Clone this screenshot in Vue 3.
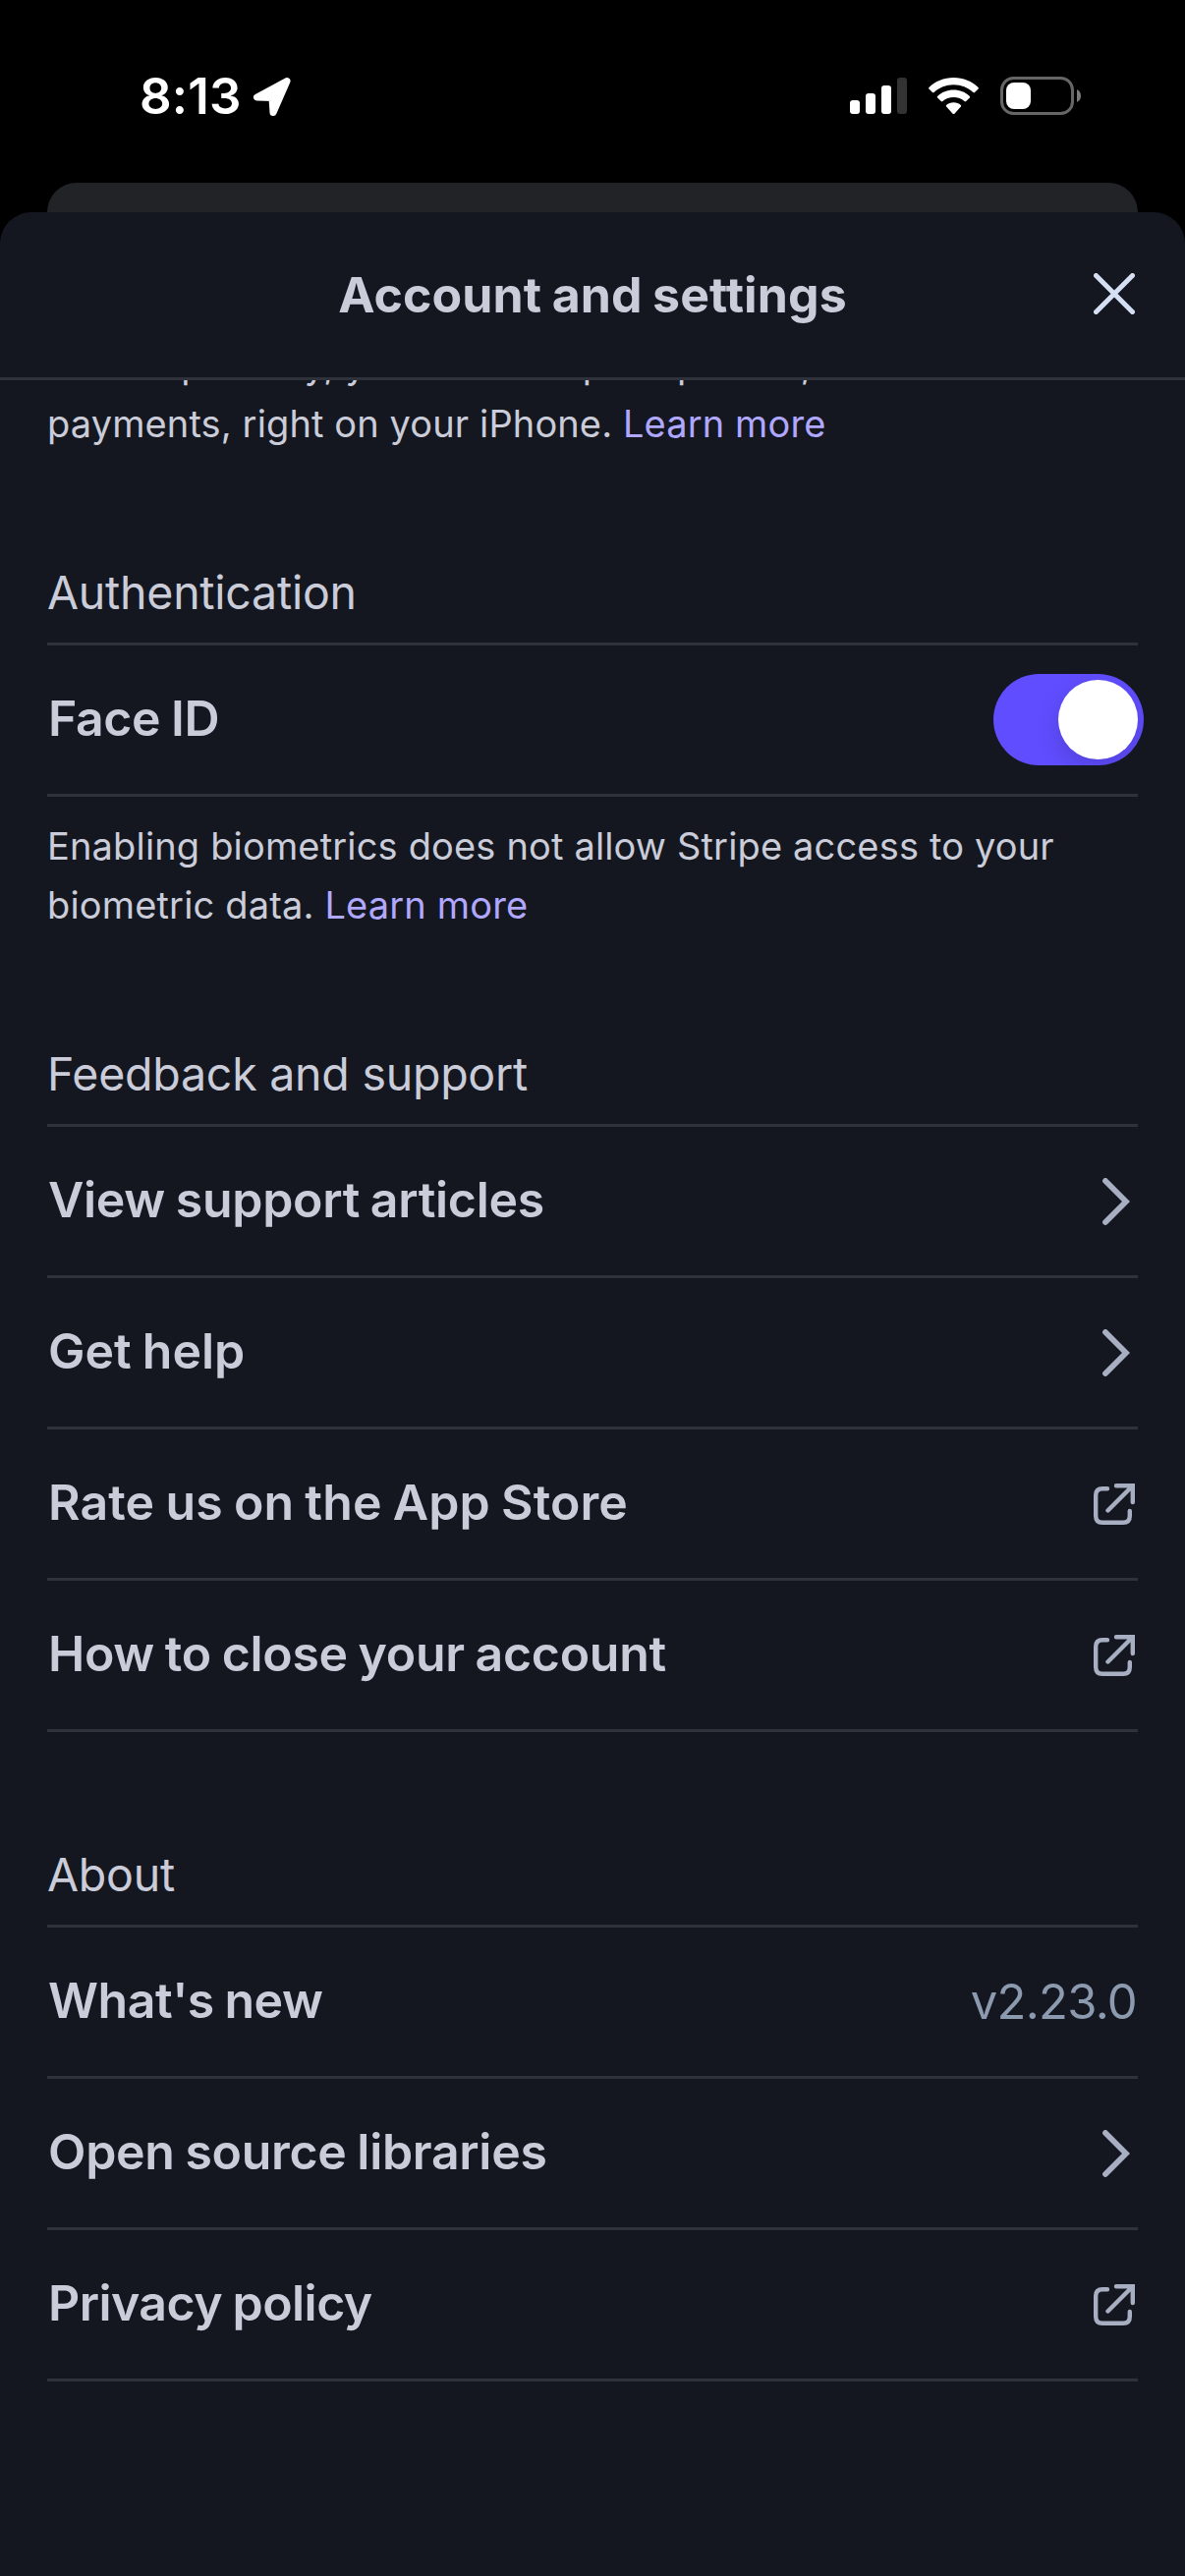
<script setup>
import { ref } from 'vue'

const faceId = ref(true)

// `tracking` is the letter spacing of each label, in pixels
const support = [
  { label: 'View support articles', icon: 'chevron', tracking: -0.3 },
  { label: 'Get help', icon: 'chevron', tracking: 0 },
  { label: 'Rate us on the App Store', icon: 'external', tracking: 0.1 },
  { label: 'How to close your account', icon: 'external', tracking: -0.3 }
]
const about = [
  { label: "What's new", value: 'v2.23.0', tracking: -0.45 },
  { label: 'Open source libraries', icon: 'chevron', tracking: -0.3 },
  { label: 'Privacy policy', icon: 'external', tracking: -0.56 }
]
const groups = [
  { title: 'Feedback and support', rows: support },
  { title: 'About', rows: about }
]
</script>

<template>
  <div class="screen">
    <header class="status">
      <div class="clock">
        <span class="time">8:13</span>
        <svg class="location" width="40" height="40" viewBox="0 0 40 40">
          <path d="M35 3.5 L4.5 20 L20 20.5 L21 35.5 Z" fill="#fff" stroke="#fff" stroke-width="7" stroke-linejoin="round" />
        </svg>
      </div>
      <div class="indicators">
        <svg width="58" height="37" viewBox="0 0 58 37" fill="#fff">
          <rect x="0" y="23" width="10" height="14" rx="3" />
          <rect x="16" y="16" width="10" height="21" rx="3" />
          <rect x="32" y="8" width="10" height="29" rx="3" />
          <rect x="48" y="0" width="10" height="37" rx="3" fill="#333" />
        </svg>
        <svg class="wifi" width="51" height="38" viewBox="0 0 51 38" fill="#fff">
          <path d="M25.5 0 C35.4 0 44.2 3.8 50.6 10 Q51.2 10.8 50.6 11.5 L47 15 Q46.2 15.7 45.4 15 C40.2 10.2 33.2 7.3 25.5 7.3 C17.8 7.3 10.8 10.2 5.6 15 Q4.8 15.7 4 15 L0.4 11.5 Q-0.2 10.8 0.4 10 C6.8 3.8 15.6 0 25.5 0 Z" />
          <path d="M25.5 12.6 C31.9 12.6 37.6 15 41.9 19 Q42.6 19.8 41.9 20.5 L38.2 24.1 Q37.4 24.7 36.6 24.1 C33.6 21.5 29.7 20 25.5 20 C21.3 20 17.4 21.5 14.4 24.1 Q13.6 24.7 12.8 24.1 L9.1 20.5 Q8.4 19.8 9.1 19 C13.4 15 19.1 12.6 25.5 12.6 Z" />
          <path d="M25.5 25.3 C28.3 25.3 30.9 26.3 32.9 28 Q33.6 28.8 32.9 29.5 L26.4 36.7 Q25.5 37.5 24.6 36.7 L18.1 29.5 Q17.4 28.8 18.1 28 C20.1 26.3 22.7 25.3 25.5 25.3 Z" />
        </svg>
        <svg class="battery" width="82" height="39" viewBox="0 0 82 39">
          <rect x="1.5" y="1.5" width="72" height="36" rx="12" fill="none" stroke="#666" stroke-width="3" />
          <rect x="6" y="6" width="25" height="27" rx="8" fill="#fff" />
          <path d="M78 13 Q82 15 82 19.5 Q82 24 78 26 Z" fill="#7b7b7b" />
        </svg>
      </div>
    </header>

    <div class="behind"></div>

    <main class="sheet">
      <div class="titlebar">
        <h1>Account and settings</h1>
        <svg class="close" width="42" height="42" viewBox="0 0 42 42">
          <path d="M2.5 2.5 L39.5 39.5 M39.5 2.5 L2.5 39.5" stroke="#d5dff3" stroke-width="5" stroke-linecap="round" />
        </svg>
      </div>

      <div class="content">
        <p class="note scrolled">
          With Tap to Pay, you can accept in-person, contactless<br />
          payments, right on your iPhone. <a>Learn more</a>
        </p>

        <section>
          <h2>Authentication</h2>
          <div class="row">
            <span class="label">Face ID</span>
            <span class="toggle" :class="{ on: faceId }"><span class="knob"></span></span>
          </div>
          <p class="note">
            Enabling biometrics does not allow Stripe access to your<br />
            biometric data. <a>Learn more</a>
          </p>
        </section>

        <section v-for="group in groups" :key="group.title" :class="{ about: group.title === 'About' }">
          <h2>{{ group.title }}</h2>
          <div v-for="row in group.rows" :key="row.label" class="row">
            <span class="label" :style="{ letterSpacing: row.tracking + 'px' }">{{ row.label }}</span>
            <span v-if="row.value" class="value">{{ row.value }}</span>
            <svg v-else-if="row.icon === 'chevron'" class="chevron" width="28" height="48" viewBox="0 0 28 48">
              <path d="M3 3 L24 24 L3 45" />
            </svg>
            <svg v-else class="external" width="42" height="42" viewBox="0 0 42 42">
              <path d="M14 5.2 H9 Q2.2 5.2 2.2 12 V33 Q2.2 39.8 9 39.8 H30 Q36.8 39.8 36.8 33 V28" />
              <path d="M23 2.2 H39.8 V19 M39 3 L14.5 27.5" />
            </svg>
          </div>
        </section>
      </div>
    </main>
  </div>
</template>

<style>
body {
  margin: 0;
  background: #000;
}
</style>

<style scoped>
.screen {
  width: 1206px;
  height: 2622px;
  display: flex;
  flex-direction: column;
  overflow: hidden;
  background: #000;
  color: #caccd9;
  font-family: Inter, "Liberation Sans", sans-serif;
}
.status {
  height: 186px;
  flex: none;
  box-sizing: border-box;
  padding: 78px 106px 0 142px;
  display: flex;
  justify-content: space-between;
  align-items: flex-start;
}
.clock {
  display: flex;
  color: #fff;
}
.time {
  width: 115px;
  font-size: 51px;
  line-height: 40px;
  font-weight: 590;
  letter-spacing: 0.2px;
}
.location {
  margin-top: 1px;
}
.indicators {
  display: flex;
}
.indicators svg {
  margin-top: 1px;
}
.indicators .wifi {
  margin-left: 22px;
}
.indicators .battery {
  margin: 0 0 0 22px;
}
.behind {
  height: 30px;
  flex: none;
  margin: 0 48px;
  background: #222327;
  border-radius: 30px 30px 0 0;
}
.sheet {
  flex: 1;
  min-height: 0;
  display: flex;
  flex-direction: column;
  background: #14171f;
  border-radius: 32px 32px 0 0;
  overflow: hidden;
}
.titlebar {
  height: 168px;
  flex: none;
  display: grid;
  grid-template-columns: 1fr auto 1fr;
  align-items: center;
  padding: 0 51px;
  border-bottom: 3px solid #2f323b;
}
h1 {
  grid-column: 2;
  margin: 0;
  font-size: 50px;
  line-height: 60px;
  font-weight: 650;
  letter-spacing: 0.1px;
  word-spacing: -1.5px;
}
.close {
  justify-self: end;
  margin-top: -2px;
}
.content {
  flex: 1;
  min-height: 0;
  padding: 0 48px;
  overflow: hidden;
}
.note {
  margin: 20px 0 0;
  font-size: 38px;
  line-height: 60px;
  letter-spacing: 0.16px;
  white-space: nowrap;
}
.note.scrolled {
  margin-top: -46px;
  letter-spacing: 0.12px;
}
.note a {
  color: #b0a8ff;
}
section {
  margin-top: 112px;
}
section.about {
  margin-top: 115px;
}
h2 {
  margin: 0;
  padding-bottom: 21px;
  border-bottom: 3px solid #2f323b;
  font-size: 46.5px;
  line-height: 60px;
  font-weight: 400;
  letter-spacing: -0.25px;
}
.row {
  height: 151px;
  display: flex;
  align-items: center;
  justify-content: space-between;
  border-bottom: 3px solid #2f323b;
}
.label {
  padding: 0 0 4px 1px;
  font-size: 50px;
  line-height: 60px;
  font-weight: 580;
  letter-spacing: -0.4px;
  word-spacing: -1.5px;
}
.value {
  margin-right: 1px;
  color: #8c9ab0;
  font-size: 49px;
  line-height: 60px;
  letter-spacing: -0.74px;
}
.row svg {
  fill: none;
  stroke: #a8afc3;
  stroke-linecap: round;
}
.chevron {
  margin-right: 8px;
  stroke-width: 5.8px;
}
.external {
  margin-right: 3px;
  stroke-width: 4.4px;
}
.toggle {
  width: 153px;
  height: 93px;
  box-sizing: border-box;
  margin-right: -6px;
  padding: 6px;
  display: flex;
  border-radius: 47px;
  background: #33363f;
  overflow: hidden;
}
.toggle.on {
  justify-content: flex-end;
  background: #604dff;
}
.knob {
  width: 81px;
  height: 81px;
  border-radius: 50%;
  background: #fff;
  box-shadow: 0 9px 24px rgba(0, 0, 0, 0.15);
}
</style>
